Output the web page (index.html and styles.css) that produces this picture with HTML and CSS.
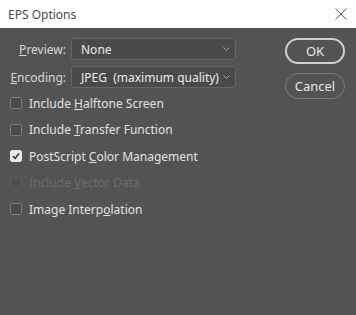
FILE: index.html
```html
<!DOCTYPE html>
<html lang="en">
<head>
    <meta charset="UTF-8">
    <meta name="viewport" content="width=device-width, initial-scale=1.0">
    <title>EPS Options</title>
    <link rel="stylesheet" href="styles.css">
</head>
<body>
    <div class="dialog">
        <div class="titlebar">
            <span class="title">EPS Options</span>
            <svg class="close" width="12" height="12" viewBox="0 0 12 12">
                <path d="M0.5 0.5 L11.5 11.5 M11.5 0.5 L0.5 11.5" stroke="#5a5a5a" stroke-width="1" fill="none"/>
            </svg>
        </div>

        <div class="content">
            <div class="form">
                <div class="fields">
                    <label class="field-label"><u>P</u>review:</label>
                    <div class="select">
                        <span class="select-value">None</span>
                        <svg class="chevron" width="7" height="4" viewBox="0 0 7 4"><path d="M0.5 0.5 L3.5 3.5 L6.5 0.5" stroke="#a8a8a8" fill="none"/></svg>
                    </div>

                    <label class="field-label"><u>E</u>ncoding:</label>
                    <div class="select">
                        <span class="select-value">JPEG  (maximum quality)</span>
                        <svg class="chevron" width="7" height="4" viewBox="0 0 7 4"><path d="M0.5 0.5 L3.5 3.5 L6.5 0.5" stroke="#a8a8a8" fill="none"/></svg>
                    </div>
                </div>

                <ul class="checks">
                    <li class="check"><span class="box"></span><span>Include <u>H</u>alftone Screen</span></li>
                    <li class="check"><span class="box"></span><span>Include <u>T</u>ransfer Function</span></li>
                    <li class="check"><span class="box checked"><svg width="10" height="10" viewBox="0 0 10 10"><path d="M2 5.2 L4.2 7.4 L8 2.6" stroke="#333" stroke-width="1.6" fill="none"/></svg></span><span>PostScript <u>C</u>olor Management</span></li>
                    <li class="check disabled"><span class="box"></span><span>Include <u>V</u>ector Data</span></li>
                    <li class="check"><span class="box"></span><span>Image Interp<u>o</u>lation</span></li>
                </ul>
            </div>

            <div class="actions">
                <button class="btn primary">OK</button>
                <button class="btn">Cancel</button>
            </div>
        </div>
    </div>
</body>
</html>
```

FILE: styles.css
```css
* {
    margin: 0;
    padding: 0;
    box-sizing: border-box;
}

body {
    font-family: 'Noto Sans', 'Open Sans', sans-serif;
    background: #535353;
    width: 356px;
    height: 315px;
    overflow: hidden;
}

/* Barra de titulo */
.titlebar {
    height: 28px;
    background: #ffffff;
    display: flex;
    align-items: center;
    justify-content: space-between;
    padding: 0 9px 0 8px;
}

.title {
    font-size: 12px;
    color: #4a4a4a;
}

.close {
    margin-top: -1px;
}

/* Contenido */
.content {
    display: flex;
    padding: 10px 11px 0 10px;
}

.form {
    width: 226px;
}

.fields {
    display: grid;
    grid-template-columns: 56px 165px;
    column-gap: 5px;
    row-gap: 6px;
    align-items: center;
}

.field-label {
    font-size: 12px;
    color: #d6d6d6;
    text-align: right;
}

.select {
    height: 22px;
    background: #4a4a4a;
    border: 1px solid #666666;
    border-radius: 3px;
    display: flex;
    align-items: center;
    justify-content: space-between;
    padding: 0 5px 0 9px;
}

.select-value {
    font-size: 12px;
    color: #eaeaea;
    white-space: pre;
}

.checks {
    list-style: none;
    margin-top: 2px;
}

.check {
    height: 26.5px;
    display: flex;
    align-items: center;
    gap: 7px;
    font-size: 12px;
    color: #e2e2e2;
}

.box {
    width: 12px;
    height: 12px;
    border: 1px solid #7c7c7c;
    border-radius: 2px;
    background: #4a4a4a;
    display: flex;
    align-items: center;
    justify-content: center;
}

.box.checked {
    background: #e8e8e8;
    border-color: #e8e8e8;
}

.check.disabled {
    color: #6c6c6c;
}

.check.disabled .box {
    border-color: #5e5e5e;
    background: #505050;
}

/* Botones */
.actions {
    margin-left: auto;
    display: flex;
    flex-direction: column;
    gap: 9px;
}

.btn {
    width: 60px;
    height: 26px;
    border-radius: 13px;
    background: transparent;
    border: 1px solid #7a7a7a;
    color: #e6e6e6;
    font-family: inherit;
    font-size: 13px;
}

.btn.primary {
    border: 2px solid #d0d0d0;
}
```
